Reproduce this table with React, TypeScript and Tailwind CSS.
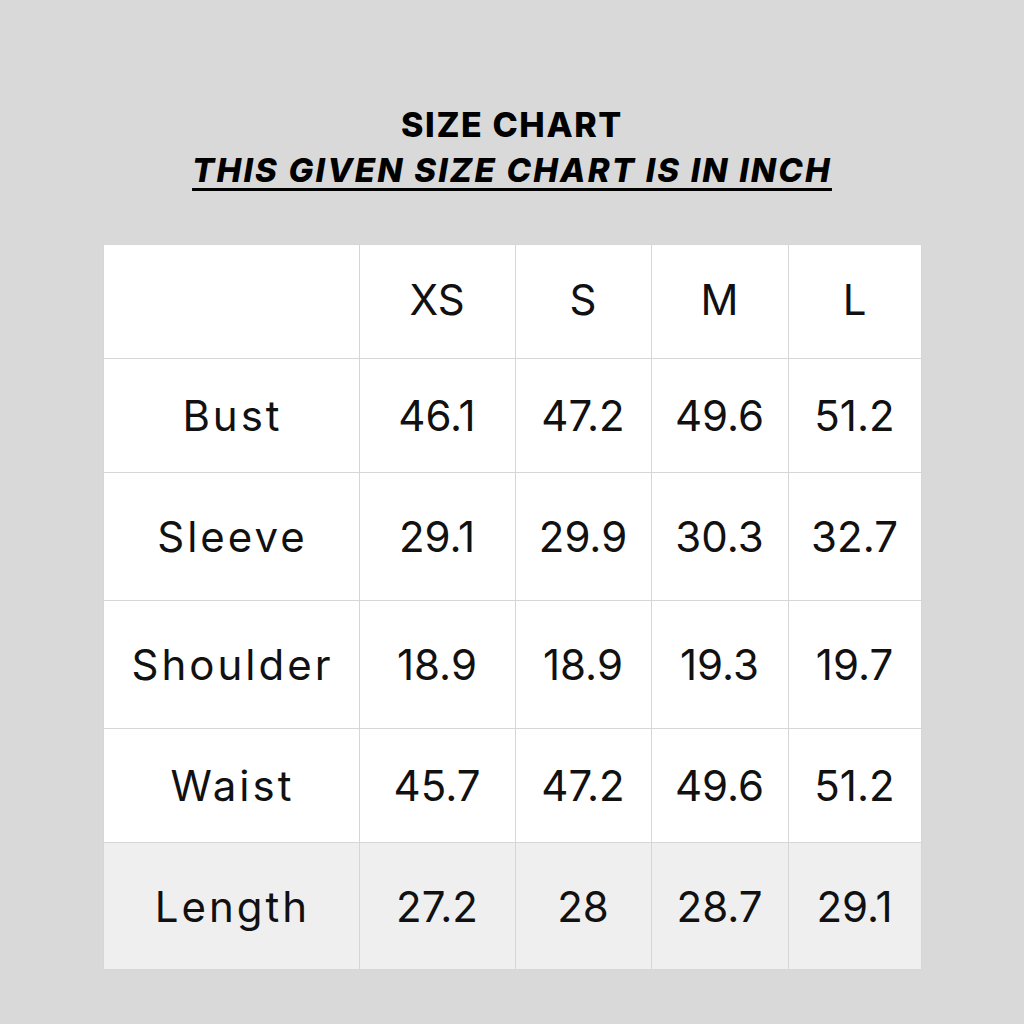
import { FC } from "react";

const sizes = ["XS", "S", "M", "L"];

const rows: { label: string; values: string[]; h: string; shade?: boolean }[] = [
    { label: "Bust", values: ["46.1", "47.2", "49.6", "51.2"], h: "h-[114px]" },
    { label: "Sleeve", values: ["29.1", "29.9", "30.3", "32.7"], h: "h-[128px]" },
    { label: "Shoulder", values: ["18.9", "18.9", "19.3", "19.7"], h: "h-[128px]" },
    { label: "Waist", values: ["45.7", "47.2", "49.6", "51.2"], h: "h-[114px]" },
    { label: "Length", values: ["27.2", "28", "28.7", "29.1"], h: "h-[127px]", shade: true },
];

const colW = ["w-[256px]", "w-[156px]", "w-[136px]", "w-[137px]", "w-[133px]"];

const App: FC = () => {
    return <>
        <div className="w-full min-h-[1024px] bg-[#d9d9d9] flex flex-col items-center pt-[104px] font-['Inter',sans-serif] text-[#111]">
            <h1 className="text-[34px] leading-[42px] font-extrabold tracking-[1.6px] text-black">
                SIZE CHART
            </h1>
            <h2 className="text-[33px] leading-[48px] font-extrabold italic underline decoration-[3px] underline-offset-[6px] tracking-[2.2px] text-black">
                THIS GIVEN SIZE CHART IS IN INCH
            </h2>

            <table className="mt-[50px] border-collapse table-fixed w-[818px] text-[42px] font-normal">
                <thead>
                    <tr className="h-[114px] bg-white">
                        <th className={`${colW[0]} border border-[#d6d6d6]`}></th>
                        {sizes.map((s, i) => (
                            <th key={s} className={`${colW[i + 1]} border border-[#d6d6d6] font-normal pb-[4px]`}>
                                {s}
                            </th>
                        ))}
                    </tr>
                </thead>
                <tbody>
                    {rows.map((r) => (
                        <tr key={r.label} className={`${r.h} ${r.shade ? "bg-[#efefef]" : "bg-white"}`}>
                            <td className="border border-[#d6d6d6] text-center tracking-[3px] pl-[3px]">{r.label}</td>
                            {r.values.map((v, i) => (
                                <td key={i} className="border border-[#d6d6d6] text-center">{v}</td>
                            ))}
                        </tr>
                    ))}
                </tbody>
            </table>
        </div>
    </>;
};

export default App;
